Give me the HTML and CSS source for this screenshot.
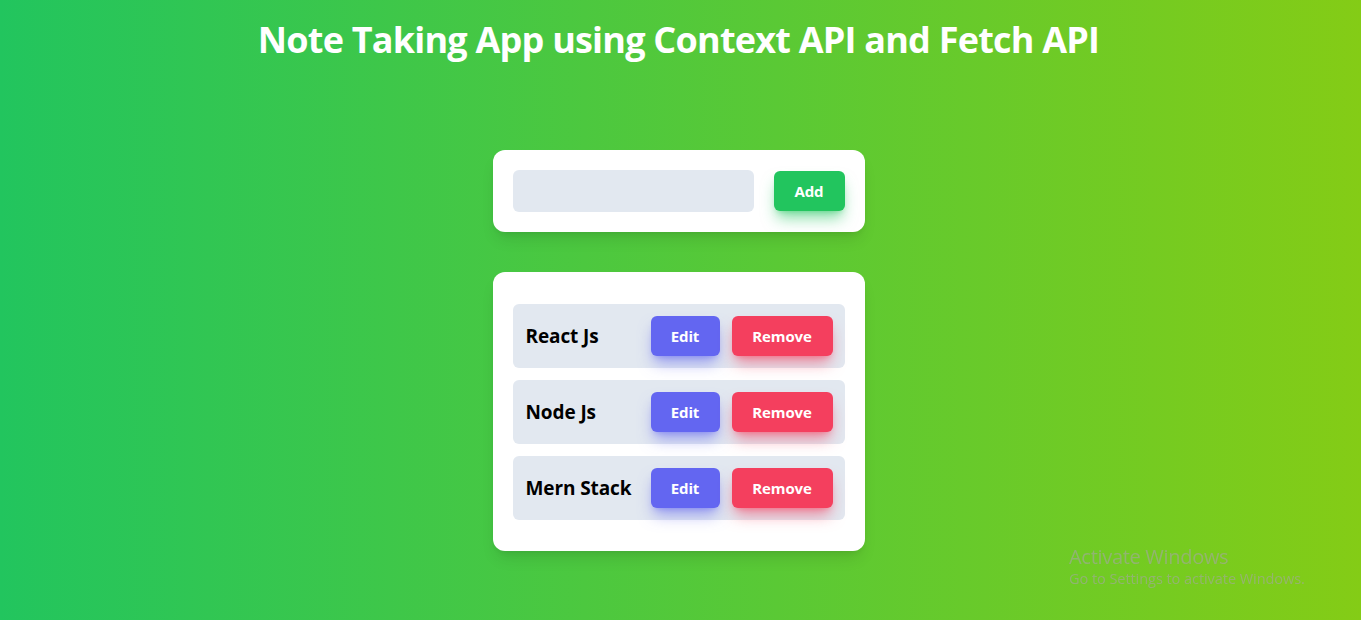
FILE: index.html
```html
<!DOCTYPE html>
<html lang="en">
<head>
<meta charset="utf-8">
<title>Note Taking App</title>
<link rel="stylesheet" href="styles.css">
</head>
<body>
<div class="page">
  <h1 class="title">Note Taking App using Context API and Fetch API</h1>
  <div class="card add-card">
    <input class="note-input" type="text">
    <button class="btn btn-add">Add</button>
  </div>
  <div class="card list-card">
    <div class="note-row">
      <span class="note-text">React Js</span>
      <div class="actions">
        <button class="btn btn-edit">Edit</button>
        <button class="btn btn-remove">Remove</button>
      </div>
    </div>
    <div class="note-row">
      <span class="note-text">Node Js</span>
      <div class="actions">
        <button class="btn btn-edit">Edit</button>
        <button class="btn btn-remove">Remove</button>
      </div>
    </div>
    <div class="note-row">
      <span class="note-text">Mern Stack</span>
      <div class="actions">
        <button class="btn btn-edit">Edit</button>
        <button class="btn btn-remove">Remove</button>
      </div>
    </div>
  </div>
</div>
<div class="watermark">
  <div class="wm-title">Activate Windows</div>
  <div class="wm-sub">Go to Settings to activate Windows.</div>
</div>
</body>
</html>
```

FILE: styles.css
```css
* { box-sizing: border-box; }
html, body { margin: 0; padding: 0; height: 100%; }
body {
  font-family: "Open Sans", "Noto Sans", sans-serif;
  background: linear-gradient(to right, #22c55e, #84cc16);
  overflow: hidden;
}
.page {
  display: flex;
  flex-direction: column;
  align-items: center;
  padding-top: 18px;
  padding-right: 4px;
}
.title {
  margin: 0;
  font-size: 36px;
  line-height: 44px;
  font-weight: 700;
  color: #ffffff;
  letter-spacing: -0.78px;
}
.card {
  width: 372px;
  background: #ffffff;
  border-radius: 12px;
  padding: 20px;
  box-shadow: 0 10px 15px -3px rgba(0,0,0,0.1), 0 4px 6px -4px rgba(0,0,0,0.1);
}
.add-card {
  margin-top: 88px;
  display: flex;
  align-items: center;
  justify-content: space-between;
}
.note-input {
  width: 241px;
  height: 42px;
  border: none;
  outline: none;
  background: #e2e8f0;
  border-radius: 6px;
  padding: 8px 12px;
  font-family: inherit;
  font-size: 16px;
}
.btn {
  height: 40px;
  padding: 0;
  border: none;
  border-radius: 6px;
  color: #ffffff;
  font-family: inherit;
  font-weight: 700;
  font-size: 15px;
  letter-spacing: -0.1px;
}
.btn-add {
  background: #22c55e;
  width: 71px;
  box-shadow: 0 10px 15px -3px rgba(34,197,94,0.55), 0 4px 6px -4px rgba(34,197,94,0.55);
}
.list-card {
  margin-top: 40px;
  padding: 32px 20px 31px;
  display: flex;
  flex-direction: column;
  gap: 12px;
}
.note-row {
  height: 64px;
  background: #e2e8f0;
  border-radius: 6px;
  padding: 0 12px 0 13px;
  display: flex;
  align-items: center;
  justify-content: space-between;
}
.note-text {
  font-size: 19px;
  font-weight: 700;
  color: #000000;
  letter-spacing: -0.1px;
}
.actions {
  display: flex;
  gap: 12px;
}
.btn-edit {
  width: 69px;
  background: #6366f1;
  box-shadow: 0 10px 15px -3px rgba(99,102,241,0.55), 0 4px 6px -4px rgba(99,102,241,0.55);
}
.btn-remove {
  width: 101px;
  background: #f43f5e;
  box-shadow: 0 10px 15px -3px rgba(244,63,94,0.55), 0 4px 6px -4px rgba(244,63,94,0.55);
}
.watermark {
  position: fixed;
  left: 1069px;
  top: 544px;
  color: rgba(165,165,165,0.6);
  font-family: "Open Sans", "Noto Sans", sans-serif;
  font-weight: 400;
}
.wm-title { font-size: 20px; line-height: 26px; letter-spacing: -0.3px; }
.wm-sub { font-size: 14.5px; line-height: 18px; letter-spacing: -0.05px; }
```
